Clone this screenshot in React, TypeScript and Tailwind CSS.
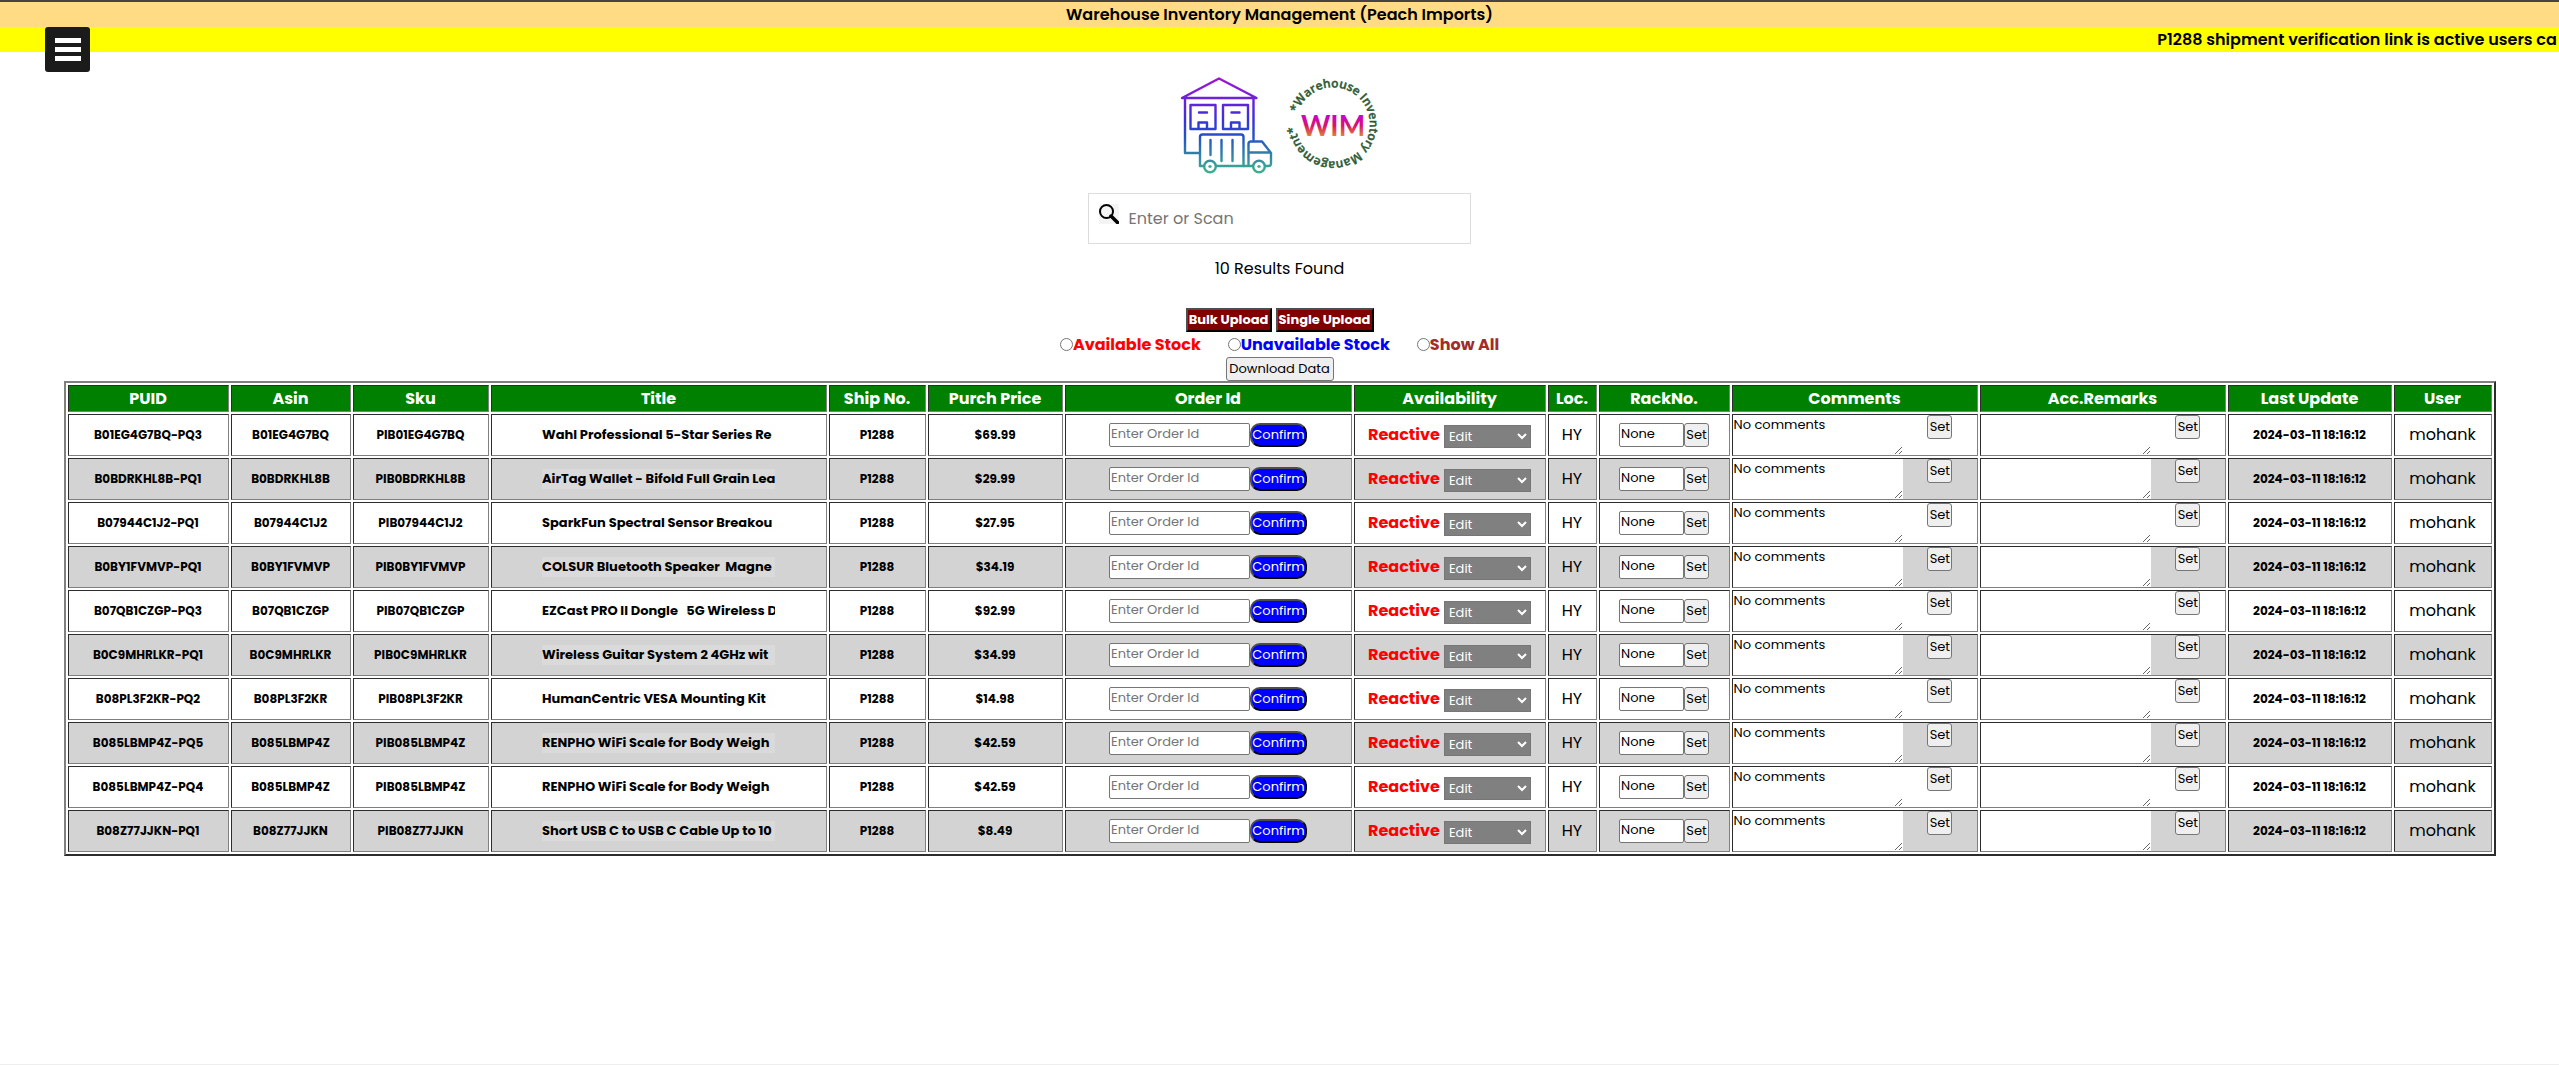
import React from "react";

const columns = [
  { name: "PUID", width: "w-[161px]" },
  { name: "Asin", width: "w-[120px]" },
  { name: "Sku", width: "w-[136px]" },
  { name: "Title", width: "w-[336px]" },
  { name: "Ship No.", width: "w-[97px]" },
  { name: "Purch Price", width: "w-[135px]" },
  { name: "Order Id", width: "w-[287px]" },
  { name: "Availability", width: "w-[192px]" },
  { name: "Loc.", width: "w-[49px]" },
  { name: "RackNo.", width: "w-[131px]" },
  { name: "Comments", width: "w-[246px]" },
  { name: "Acc.Remarks", width: "w-[246px]" },
  { name: "Last Update", width: "w-[164px]" },
  { name: "User", width: "w-[98px]" },
];

const items = [
  { asin: "B01EG4G7BQ", lot: "PQ3", price: "$69.99", title: "Wahl Professional 5-Star Series Re" },
  { asin: "B0BDRKHL8B", lot: "PQ1", price: "$29.99", title: "AirTag Wallet - Bifold Full Grain Lea" },
  { asin: "B07944C1J2", lot: "PQ1", price: "$27.95", title: "SparkFun Spectral Sensor Breakou" },
  { asin: "B0BY1FVMVP", lot: "PQ1", price: "$34.19", title: "COLSUR Bluetooth Speaker  Magne" },
  { asin: "B07QB1CZGP", lot: "PQ3", price: "$92.99", title: "EZCast PRO II Dongle   5G Wireless D" },
  { asin: "B0C9MHRLKR", lot: "PQ1", price: "$34.99", title: "Wireless Guitar System 2 4GHz wit" },
  { asin: "B08PL3F2KR", lot: "PQ2", price: "$14.98", title: "HumanCentric VESA Mounting Kit" },
  { asin: "B085LBMP4Z", lot: "PQ5", price: "$42.59", title: "RENPHO WiFi Scale for Body Weigh" },
  { asin: "B085LBMP4Z", lot: "PQ4", price: "$42.59", title: "RENPHO WiFi Scale for Body Weigh" },
  { asin: "B08Z77JJKN", lot: "PQ1", price: "$8.49", title: "Short USB C to USB C Cable Up to 10" },
];

const cell = "border border-t-[#2c2c2c] border-l-[#2c2c2c] border-r-[#808080] border-b-[#808080] p-0 text-center align-middle";
const strong = cell + " text-xs font-bold";
const setButton = "h-6 w-[25px] rounded-[3px] border border-[#767676] bg-[#efefef] pb-0.5 text-[13px] leading-none";
const uploadButton = "h-6 border-2 border-t-[#4d4d4d] border-r-black border-b-black border-l-[#4d4d4d] bg-[#800000] pb-0.5 text-[13px] leading-none font-bold whitespace-nowrap text-white";

function WarehouseLogo() {
  return (
    <svg width="96" height="100" viewBox="1177 75 96 100" fill="none" stroke="url(#wh)" strokeWidth="2.4" strokeLinecap="round" strokeLinejoin="round" aria-label="Warehouse">
      <defs>
        <linearGradient id="wh" gradientUnits="userSpaceOnUse" x1="0" y1="77" x2="0" y2="172">
          <stop offset="0" stopColor="#a312d8" />
          <stop offset="0.45" stopColor="#3a30de" />
          <stop offset="0.62" stopColor="#2350c8" />
          <stop offset="1" stopColor="#3cb08c" />
        </linearGradient>
      </defs>
      <path d="M1182 98 1219 78.500 1256.500 98ZM1185 99V153H1199M1253.500 99V140" />
      <path d="M1190.500 105H1215.500V129H1190.500ZM1223 105H1248V129H1223ZM1199 112.500H1207M1231.500 112.500H1239.500M1198.500 129V122.500H1207V129M1231 129V122.500H1239.500V129" />
      <path d="M1203 166H1200V137Q1200 134.500 1202.500 134.500H1241Q1243.500 134.500 1243.500 137V166H1216.500M1210.500 140V155M1221.500 140V161M1232.500 140V161" />
      <path d="M1243.500 166H1252.500M1248.500 166V144Q1248.500 141.500 1251 141.500H1262L1271 153V163.500Q1271 166 1268.500 166H1265.500M1249 152.500H1270" />
      <circle cx="1210" cy="166.500" r="5.800" />
      <circle cx="1259" cy="166.500" r="5.800" />
      <path d="M1209.500 166.500H1210.500M1258.500 166.500H1259.500" />
    </svg>
  );
}

function WimLogo() {
  return (
    <svg width="100" height="100" viewBox="-50 -50 100 100" aria-label="WIM">
      <defs>
        <linearGradient id="wimFill" gradientUnits="userSpaceOnUse" x1="0" y1="-10" x2="0" y2="11">
          <stop offset="0" stopColor="#cc00d8" />
          <stop offset="0.5" stopColor="#d8146a" />
          <stop offset="1" stopColor="#e08038" />
        </linearGradient>
        <path id="ring" d="M-35.300 -12A37 37 0 1 1 -36.900 3" />
      </defs>
      <text className="font-['Open_Sans',sans-serif] text-[12px] font-semibold" fill="#2d5a34" stroke="#2d5a34" strokeWidth="0.4">
        <textPath href="#ring">*Warehouse Inventory Management*</textPath>
      </text>
      <text x="0" y="11" textAnchor="middle" className="font-[Lato,sans-serif] text-[28px] font-bold" fill="url(#wimFill)">WIM</text>
    </svg>
  );
}

function SearchIcon() {
  return (
    <svg width="20" height="20" viewBox="0 0 20 20" fill="none" stroke="#000" aria-hidden="true">
      <circle cx="7.500" cy="7.500" r="6.500" strokeWidth="2" />
      <path d="M12 12 18.500 18.500" strokeWidth="3.500" strokeLinecap="round" />
    </svg>
  );
}

function Remarks({ label, text }: { label: string; text: string }) {
  return (
    <div className="flex h-10">
      <textarea aria-label={label} defaultValue={text} className="h-10 w-[70%] resize bg-white px-px text-[13px] leading-5" />
      <div className="flex flex-1 items-start justify-center">
        <button className={setButton}>Set</button>
      </div>
    </div>
  );
}

export default function App() {
  return (
    <div className="min-h-screen border-b border-[#eeeeee] bg-white font-[Poppins,Inter,sans-serif] text-black">
      <header className="relative border-t-2 border-[#444444] text-base font-semibold">
        <h1 className="h-[25px] bg-[#ffdb84] text-center leading-[25px]">Warehouse Inventory Management (Peach Imports)</h1>
        <div className="h-[25px] overflow-hidden bg-[#ffff00] pl-[84.3%] leading-[25px] whitespace-nowrap">
          P1288 shipment verification link is active users ca
        </div>
        <button aria-label="Menu" className="absolute top-[25px] left-[45px] flex h-[45px] w-[45px] flex-col items-center justify-center gap-1 rounded-[3px] bg-[#1b1b1b]">
          <span className="h-[5px] w-[26px] bg-white" />
          <span className="h-[5px] w-[26px] bg-white" />
          <span className="h-[5px] w-[26px] bg-white" />
        </button>
      </header>

      <main className="flex flex-col items-center pb-4">
        <div className="mt-[23px] flex gap-2.5">
          <WarehouseLogo />
          <WimLogo />
        </div>

        <label className="mt-[18px] flex h-[51px] w-[15%] gap-2.5 border border-[#dddddd] px-2.5">
          <span className="mt-2.5 h-5 w-5 bg-[#f4f4f4]"><SearchIcon /></span>
          <input aria-label="Enter or Scan" placeholder="Enter or Scan" className="min-w-0 flex-1 text-base outline-none placeholder:text-[#757575]" />
        </label>

        <p className="mt-[13px] leading-6">10 Results Found</p>

        <div className="mt-[27px] flex gap-1">
          <button className={uploadButton + " w-[86px]"}>Bulk Upload</button>
          <button className={uploadButton + " w-[98px]"}>Single Upload</button>
        </div>

        <div className="flex gap-[27px] leading-[25px] font-bold">
          <label className="flex items-center text-[#ff0000]"><input type="radio" name="stock" className="h-[13px] w-[13px]" />Available Stock</label>
          <label className="flex items-center text-[#0000ff]"><input type="radio" name="stock" className="h-[13px] w-[13px]" />Unavailable Stock</label>
          <label className="flex items-center text-[#a52a2a]"><input type="radio" name="stock" className="h-[13px] w-[13px]" />Show All</label>
        </div>

        <button className="h-6 w-[108px] rounded-[3px] border border-[#767676] bg-[#efefef] pb-0.5 text-[13px] leading-none whitespace-nowrap">Download Data</button>

        <table className="w-[95%] table-fixed border-separate border-spacing-0.5 border-2 border-t-[#808080] border-r-[#2c2c2c] border-b-[#2c2c2c] border-l-[#808080]">
          <thead>
            <tr className="h-[27px] bg-[#008000] text-white">
              {columns.map((c) => (
                <th key={c.name} scope="col" className={cell + " leading-6 font-bold " + c.width}>{c.name}</th>
              ))}
            </tr>
          </thead>
          <tbody>
            {items.map((it) => (
              <tr key={it.asin + it.lot} className="h-[42px] even:bg-[#d3d3d3]">
                <td className={strong}>{it.asin}-{it.lot}</td>
                <td className={strong}>{it.asin}</td>
                <td className={strong}>PI{it.asin}</td>
                <td className={cell}>
                  <div className="mx-auto h-5 w-[233px] overflow-hidden bg-[#f9f9f9]/20 text-left text-[13px] leading-5 font-bold whitespace-pre">{it.title}</div>
                </td>
                <td className={strong}>P1288</td>
                <td className={strong}>{it.price}</td>
                <td className={cell}>
                  <div className="flex justify-center">
                    <input aria-label="Order Id" placeholder="Enter Order Id" className="h-6 w-[141px] rounded-[2px] border border-[#767676] bg-white px-px pb-0.5 text-[13px] placeholder:text-[#757575]" />
                    <button className="h-6 w-[57px] rounded-[10px] border-2 border-t-[#4d4d4d] border-r-black border-b-black border-l-[#4d4d4d] bg-[#0000ff] pb-0.5 text-[13px] leading-none text-white">
                      <span className="flex justify-center">Confirm</span>
                    </button>
                  </div>
                </td>
                <td className={cell}>
                  <div className="flex items-center justify-center gap-1">
                    <span className="font-bold text-[#ff0000]">Reactive</span>
                    <select aria-label="Availability" className="mt-0.5 h-[23px] w-[87px] border border-[#767676] bg-[#808080] text-[13px] text-white">
                      <option>Edit</option>
                    </select>
                  </div>
                </td>
                <td className={cell}>HY</td>
                <td className={cell}>
                  <div className="flex justify-center">
                    <input aria-label="Rack number" defaultValue="None" className="h-6 w-[65px] rounded-[2px] border border-[#767676] bg-white px-px pb-0.5 text-[13px]" />
                    <button className={setButton}>Set</button>
                  </div>
                </td>
                <td className={cell}><Remarks label="Comments" text="No comments" /></td>
                <td className={cell}><Remarks label="Acc. remarks" text="" /></td>
                <td className={strong}>2024-03-11 18:16:12</td>
                <td className={cell}>mohank</td>
              </tr>
            ))}
          </tbody>
        </table>
      </main>
    </div>
  );
}
